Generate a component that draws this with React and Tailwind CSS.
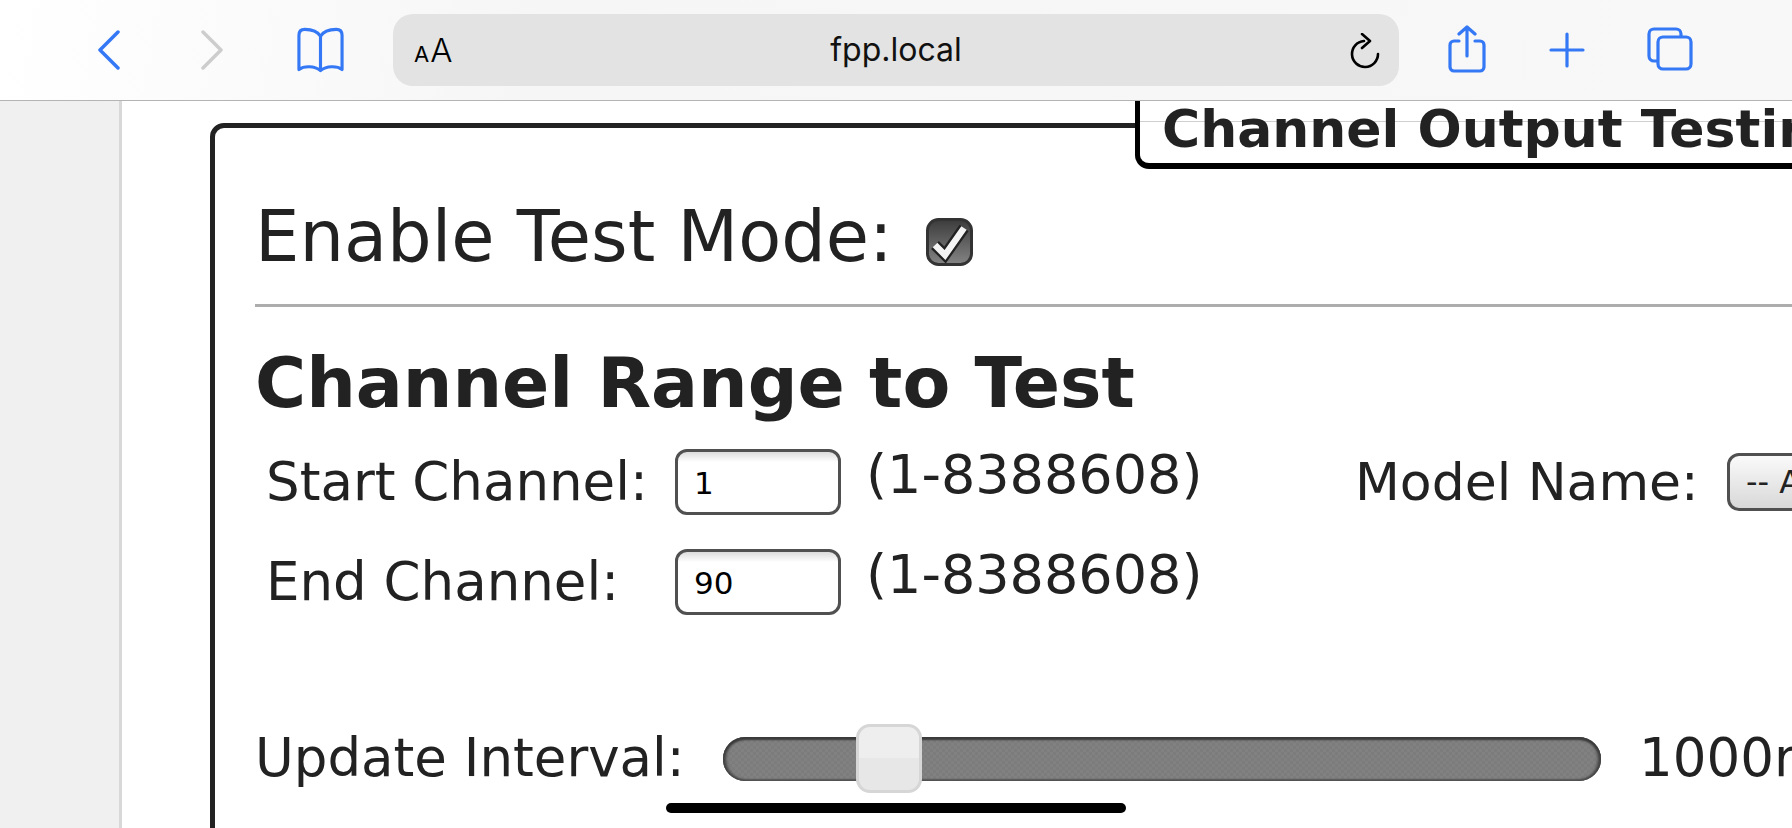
const F = { fontFamily: '"DejaVu Sans", sans-serif' };

function Input({ value }) {
  return (
    <div className="flex h-[66px] w-[166px] shrink-0 items-center rounded-[12px] border-[3px] border-[#505050] bg-[linear-gradient(#dcdcdc_0px,#ffffff_10px)] pl-[16px] pt-[2px] text-[31px] text-black">
      {value}
    </div>
  );
}

function Row({ label, value, children }) {
  return (
    <div className="flex h-[66px] shrink-0 items-center text-[53px] text-[#222]">
      <span className="ml-[11px] w-[409px] shrink-0">{label}</span>
      <Input value={value} />
      <span className="ml-[25px] w-[489px] shrink-0 -translate-y-[8px] text-[54px]">(1-8388608)</span>
      {children}
    </div>
  );
}

export default function App() {
  return (
    <div className="relative flex h-[828px] w-[1792px] flex-col overflow-hidden bg-white" style={F}>
      <header className="z-10 flex h-[101px] shrink-0 items-center border-b border-[#b4b4b4] bg-[linear-gradient(100deg,#ffffff,#f6f6f6_30%,#f8f8f8)] pl-[97px]">
        <svg width="24" height="40" viewBox="0 0 24 40" fill="none" stroke="#3478f6" strokeWidth="3.5" strokeLinecap="round" strokeLinejoin="round"><path d="M21 2 3 20l18 18" /></svg>
        <svg className="ml-[79px]" width="24" height="40" viewBox="0 0 24 40" fill="none" stroke="#cdcdcd" strokeWidth="3.5" strokeLinecap="round" strokeLinejoin="round"><path d="m3 2 18 18L3 38" /></svg>
        <svg className="ml-[72px]" width="49" height="46" viewBox="0 0 50 46" fill="none" stroke="#3478f6" strokeWidth="3.2" strokeLinecap="round" strokeLinejoin="round">
          <path d="M25 9C22 4 16 2 9 2 5 2 3 4 3 8v35c5-4 16-4 22 1 6-5 17-5 22-1V8c0-4-2-6-6-6-7 0-13 2-16 7Zm0 0v35" />
        </svg>
        <div className="relative ml-[48px] flex h-[72px] w-[1006px] shrink-0 items-center justify-center rounded-[20px] bg-[#e3e3e3]">
          <span className="absolute left-[21px] top-[12px] flex items-baseline font-light text-black" style={{ fontFamily: 'Inter, sans-serif' }}>
            <span className="text-[22px] font-normal">A</span><span className="ml-[1px] text-[33px]">A</span>
          </span>
          <span className="text-[32px] text-[#111]" style={{ fontFamily: 'Inter, sans-serif' }}>fpp.local</span>
          <svg className="absolute left-[956px] top-[19px]" width="32" height="36" viewBox="0 0 32 36" fill="none" stroke="#000" strokeWidth="2.6" strokeLinecap="round" strokeLinejoin="round">
            <path d="M15 8a13 13 0 1 0 14 13" /><path d="M13 1l8 7-8 7" />
          </svg>
        </div>
        <svg className="ml-[49px] -mt-[2px]" width="38" height="48" viewBox="0 0 38 48" fill="none" stroke="#3478f6" strokeWidth="3.2" strokeLinecap="round" strokeLinejoin="round">
          <path d="M11 16H6a4 4 0 0 0-4 4v22a4 4 0 0 0 4 4h26a4 4 0 0 0 4-4V20a4 4 0 0 0-4-4h-5" /><path d="M19 31V2M11 9l8-7 8 7" />
        </svg>
        <svg className="ml-[63px]" width="36" height="36" viewBox="0 0 36 36" fill="none" stroke="#3478f6" strokeWidth="3.2" strokeLinecap="round"><path d="M18 2v32M2 18h32" /></svg>
        <svg className="ml-[62px] -mt-[2px]" width="46" height="44" viewBox="0 0 46 44" fill="none" stroke="#3478f6" strokeWidth="3.2" strokeLinejoin="round">
          <path d="M34 10V7a5 5 0 0 0-5-5H7a5 5 0 0 0-5 5v22a5 5 0 0 0 5 5h4" /><rect x="11" y="10" width="33" height="32" rx="5" />
        </svg>
      </header>

      <div className="flex min-h-0 flex-1">
        <aside className="w-[122px] shrink-0 border-r-[3px] border-[#d8d8d8] bg-[#f0f0f0]" />
        <main className="min-w-0 flex-1 pl-[88px] pt-[22px]">
          <section className="relative flex h-[800px] w-[1800px] flex-col rounded-tl-[14px] border-[5px] border-[#222] pl-[40px]">
            <div className="absolute -top-[28px] left-[920px] h-[69px] w-[900px] rounded-bl-[14px] border-b-[6px] border-l-[5px] border-black bg-white pl-[22px] text-[52px] font-bold leading-[58px] text-[#222]">
              <div className="absolute left-0 right-0 top-[21px] h-px bg-[#cfcfcf]" />
              <span className="relative">Channel Output Testing</span>
            </div>

            <div className="mt-[80px] flex h-[60px] shrink-0 items-center text-[70.3px] text-[#222]">
              <span>Enable Test Mode:</span>
              <svg className="ml-[33px] mt-[7px]" width="47" height="48" viewBox="0 0 47 48">
                <defs><linearGradient id="cb" x1="0" y1="0" x2="0" y2="1"><stop offset="0" stopColor="#3c3c3c" /><stop offset="1" stopColor="#848484" /></linearGradient></defs>
                <rect x="1.5" y="1.5" width="44" height="45" rx="11" fill="url(#cb)" stroke="#333" strokeWidth="3" />
                <path d="M9 27l10 10L38 10" fill="none" stroke="#222" strokeWidth="11" strokeLinejoin="miter" />
                <path d="M9 27l10 10L38 10" fill="none" stroke="#f4f4f4" strokeWidth="6.5" strokeLinejoin="miter" />
              </svg>
            </div>

            <div className="mt-[36px] h-[3px] shrink-0 bg-[#adadad]" />

            <h2 className="mt-[46px] flex h-[60px] shrink-0 items-center text-[69.7px] font-bold text-[#222]">Channel Range to Test</h2>

            <div className="mt-[36px]">
              <Row label="Start Channel:" value="1">
                <span className="w-[372px] shrink-0 text-[52px]">Model Name:</span>
                <div className="flex h-[58px] w-[300px] shrink-0 items-center rounded-[12px] border-[3px] border-[#505050] bg-[linear-gradient(#fafafa,#d8d8d8)] pl-[16px] text-[32px] text-[#222]">
                  -- All Models --
                </div>
              </Row>
            </div>
            <div className="mt-[34px]">
              <Row label="End Channel:" value="90" />
            </div>

            <div className="mt-[109px] flex h-[70px] shrink-0 items-center text-[53px] text-[#222]">
              <span className="w-[468px] shrink-0 -translate-y-[1px]">Update Interval:</span>
              <div className="relative h-[44px] w-[878px] shrink-0 rounded-full bg-[repeating-conic-gradient(#7c7c7c_0_25%,#818181_0_50%)] bg-[length:6px_6px] shadow-[inset_0_3px_2px_#3a3a3a,inset_3px_0_3px_#444444,inset_-3px_0_3px_#444444,inset_0_-2px_1px_#666666]">
                <div className="absolute -top-[13px] left-[133px] h-[69px] w-[66px] rounded-[14px] border-[3px] border-[#d6d6d6] bg-[linear-gradient(#eeeeee_50%,#e7e7e7_50%)]" />
              </div>
              <span className="ml-[38px] -translate-y-[1px]">1000ms</span>
            </div>
          </section>
        </main>
      </div>

      <div className="absolute left-[666px] top-[803px] h-[10px] w-[460px] rounded-full bg-black" />
    </div>
  );
}
